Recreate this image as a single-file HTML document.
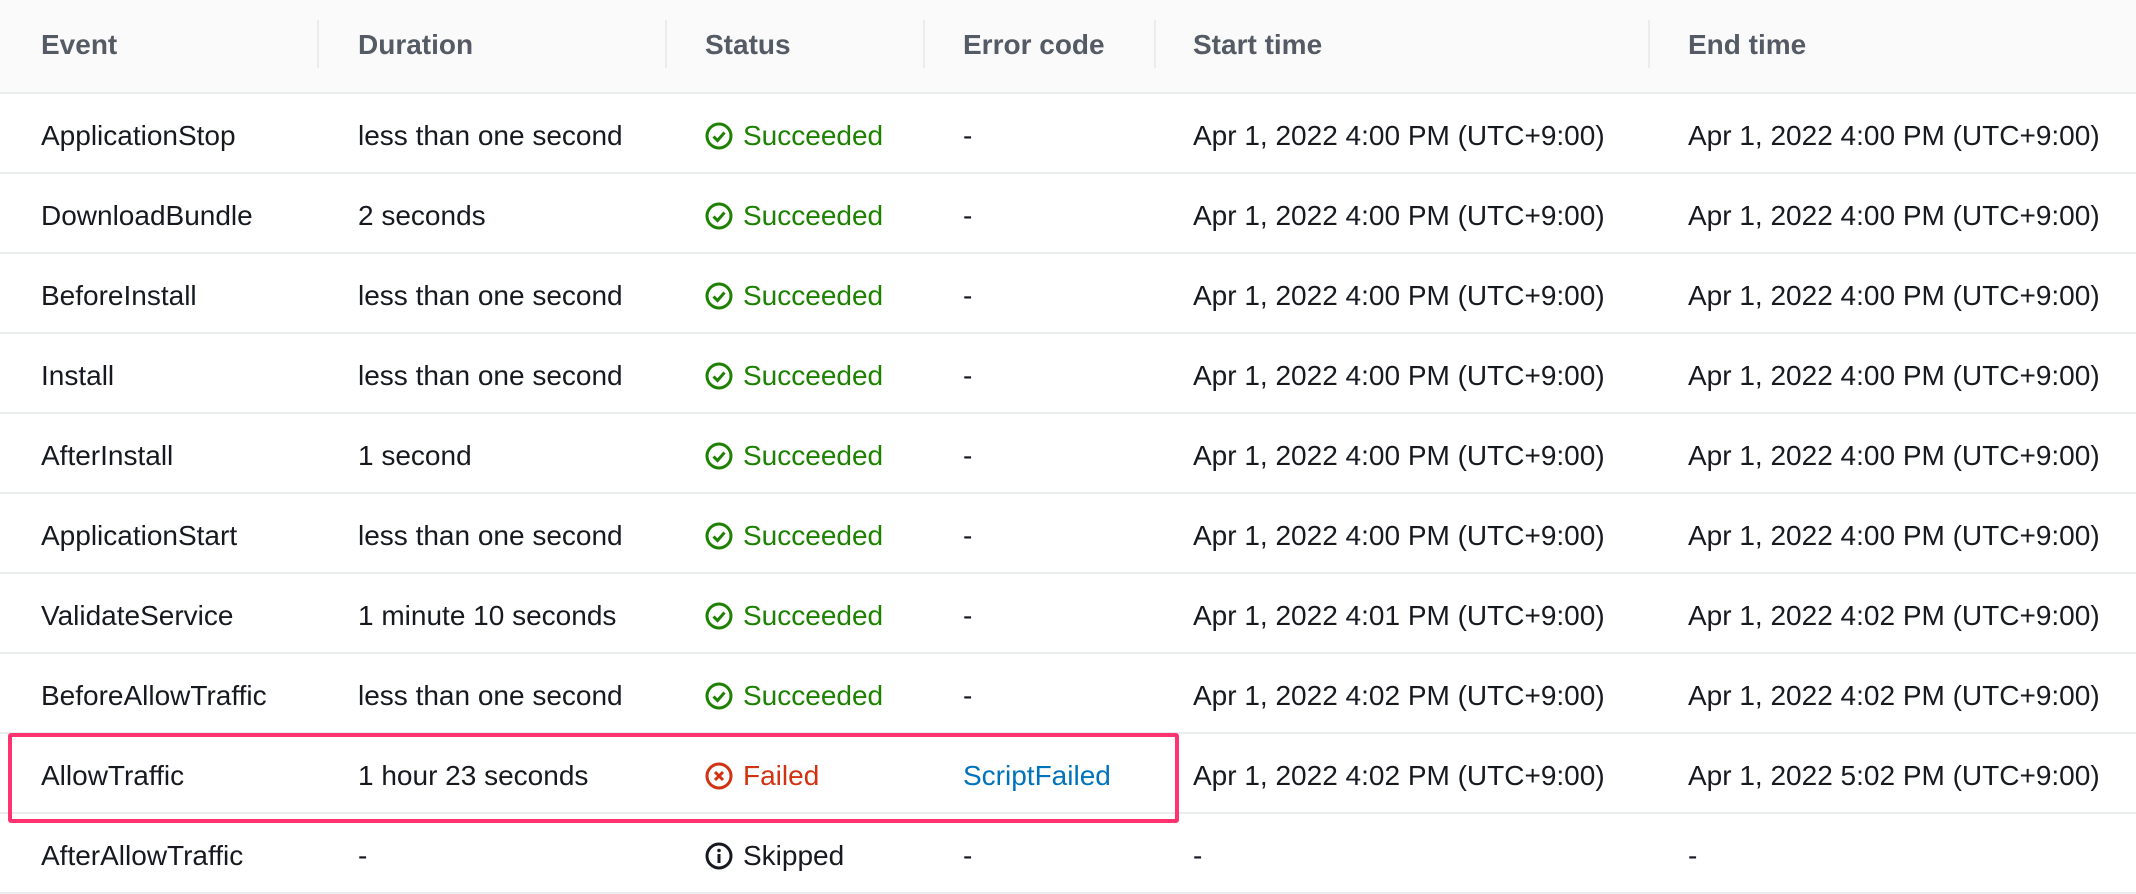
<!DOCTYPE html>
<html><head><style>
body{margin:0;width:2136px;height:894px;background:#fff;font-family:"Liberation Sans",sans-serif;font-size:28px;color:#16191f;position:relative;overflow:hidden}
.hdr{position:absolute;left:0;top:0;width:2136px;height:92px;background:#fafafa;border-bottom:2px solid #eaeded}
.h{position:absolute;top:29px;font-weight:bold;color:#545b64}
.sep{position:absolute;top:20px;width:2px;height:48px;background:#eaeded}
.row{position:absolute;left:0;width:2136px;height:78px;border-bottom:2px solid #eaeded}
.c{position:absolute;top:26px;white-space:nowrap}
.ic{display:inline-block;vertical-align:-5px;margin-right:10px}
.ok{color:#1d8102}.bad{color:#d13212}.lnk{color:#0073bb}
.box{position:absolute;left:8px;top:733px;width:1163px;height:82px;border:4px solid #ff3370;border-radius:3px}
</style></head><body>
<div class="hdr">
<div class="h" style="left:41px">Event</div>
<div class="sep" style="left:317px"></div>
<div class="h" style="left:358px">Duration</div>
<div class="sep" style="left:665px"></div>
<div class="h" style="left:705px">Status</div>
<div class="sep" style="left:923px"></div>
<div class="h" style="left:963px">Error code</div>
<div class="sep" style="left:1154px"></div>
<div class="h" style="left:1193px">Start time</div>
<div class="sep" style="left:1648px"></div>
<div class="h" style="left:1688px">End time</div>
</div>
<div id="rows"></div>
<script>
var ok='<svg class="ic" width="28" height="28" viewBox="0 0 28 28"><circle cx="14" cy="14" r="12" fill="none" stroke="#1d8102" stroke-width="3"/><path d="M8.5 14.5l4 4 7-8" fill="none" stroke="#1d8102" stroke-width="3"/></svg>';
var bad='<svg class="ic" width="28" height="28" viewBox="0 0 28 28"><circle cx="14" cy="14" r="12" fill="none" stroke="#d13212" stroke-width="3"/><path d="M10 10l8 8M18 10l-8 8" stroke="#d13212" stroke-width="3"/></svg>';
var inf='<svg class="ic" width="28" height="28" viewBox="0 0 28 28"><circle cx="14" cy="14" r="12" fill="none" stroke="#16191f" stroke-width="3"/><circle cx="14" cy="8.5" r="1.8" fill="#16191f"/><path d="M14 12v9" stroke="#16191f" stroke-width="3"/></svg>';
var d=[
["ApplicationStop","less than one second",0,"-","4:00","4:00"],
["DownloadBundle","2 seconds",0,"-","4:00","4:00"],
["BeforeInstall","less than one second",0,"-","4:00","4:00"],
["Install","less than one second",0,"-","4:00","4:00"],
["AfterInstall","1 second",0,"-","4:00","4:00"],
["ApplicationStart","less than one second",0,"-","4:00","4:00"],
["ValidateService","1 minute 10 seconds",0,"-","4:01","4:02"],
["BeforeAllowTraffic","less than one second",0,"-","4:02","4:02"],
["AllowTraffic","1 hour 23 seconds",1,"ScriptFailed","4:02","5:02"],
["AfterAllowTraffic","-",2,"-",null,null]];
var h='';
d.forEach(function(r,i){
var st=r[2]==0?ok+'<span class="ok">Succeeded</span>':r[2]==1?bad+'<span class="bad">Failed</span>':inf+'<span>Skipped</span>';
var t=function(x){return x?'Apr 1, 2022 '+x+' PM (UTC+9:00)':'-'};
h+='<div class="row" style="top:'+(94+i*80)+'px"><div class="c" style="left:41px">'+r[0]+'</div><div class="c" style="left:358px">'+r[1]+'</div><div class="c" style="left:705px">'+st+'</div><div class="c'+(r[3]!='-'?' lnk':'')+'" style="left:963px">'+r[3]+'</div><div class="c" style="left:1193px">'+t(r[4])+'</div><div class="c" style="left:1688px">'+t(r[5])+'</div></div>';
});
document.getElementById('rows').innerHTML=h;
</script>
<div class="box"></div>
</body></html>
